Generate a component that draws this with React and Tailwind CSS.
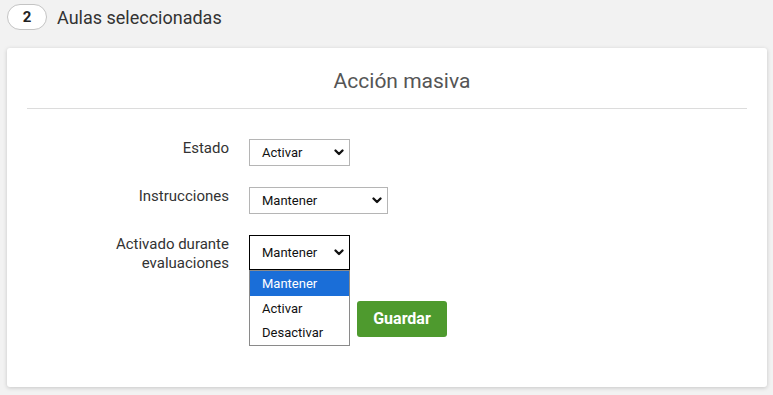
import React from "react";

const Chevron = () => (
  <svg width="10" height="7" viewBox="0 0 10 7" className="shrink-0">
    <path d="M1.5 1.5 L5 5 L8.5 1.5" fill="none" stroke="#111" strokeWidth="2.3" strokeLinecap="round" strokeLinejoin="round" />
  </svg>
);

const FakeSelect = ({ value, width, focused }) => (
  <div
    className={`flex items-center justify-between bg-white pl-3 pr-[5px] text-[13px] text-[#111] ${width} ${
      focused ? "h-[35px] border border-black" : "h-[27px] border border-[#b5b5b5]"
    }`}
  >
    <span>{value}</span>
    <Chevron />
  </div>
);

const Row = ({ label, children }) => (
  <div className="flex items-start">
    <div className="w-[202px] text-right text-[15px] leading-[19px] text-[#333]">{label}</div>
    <div className="ml-5">{children}</div>
  </div>
);

const options = ["Mantener", "Activar", "Desactivar"];

export default function App() {
  return (
    <div
      className="min-h-screen bg-[#f2f2f2] px-[7px] pt-1 pb-2"
      style={{ fontFamily: "Roboto, 'Liberation Sans', sans-serif" }}
    >
      <div className="flex h-[26px] items-center">
        <div className="flex h-[26px] w-[40px] items-center justify-center rounded-full border border-[#c4c4c4] bg-white text-[15px] font-bold text-[#222]">
          2
        </div>
        <span className="ml-[10px] text-[18px] text-[#333]">Aulas seleccionadas</span>
      </div>

      <div className="mt-[18px] h-[339px] w-[760px] rounded-[3px] bg-white px-5 shadow-[0_1px_4px_rgba(0,0,0,0.18)]">
        <div className="flex h-[60px] items-end justify-center pb-[11px] pl-[30px] text-[21px] text-[#555]">
          Acción masiva
        </div>
        <div className="border-t border-[#dcdcdc]" />

        <div className="mt-[30px] flex flex-col gap-[21px]">
          <Row label="Estado">
            <FakeSelect value="Activar" width="w-[101px]" />
          </Row>
          <Row label="Instrucciones">
            <FakeSelect value="Mantener" width="w-[139px]" />
          </Row>
          <Row
            label={
              <>
                Activado durante
                <br />
                evaluaciones
              </>
            }
          >
            <div className="relative">
              <FakeSelect value="Mantener" width="w-[101px]" focused />
              <div className="absolute left-0 top-[35px] z-10 w-[101px] border border-[#8a8a8a] bg-white text-[13px] text-[#111]">
                {options.map((o, i) => (
                  <div
                    key={o}
                    className={`flex h-[24.5px] items-center pl-3 pt-px ${i === 0 ? "bg-[#1a6ed8] text-white" : ""}`}
                  >
                    {o}
                  </div>
                ))}
              </div>
            </div>
          </Row>
        </div>

        <div className="ml-[330px] mt-[28px]">
          <button className="h-[36px] w-[90px] rounded-[3px] bg-[#4e9a2e] text-[16px] font-bold text-white">
            Guardar
          </button>
        </div>
      </div>
    </div>
  );
}
